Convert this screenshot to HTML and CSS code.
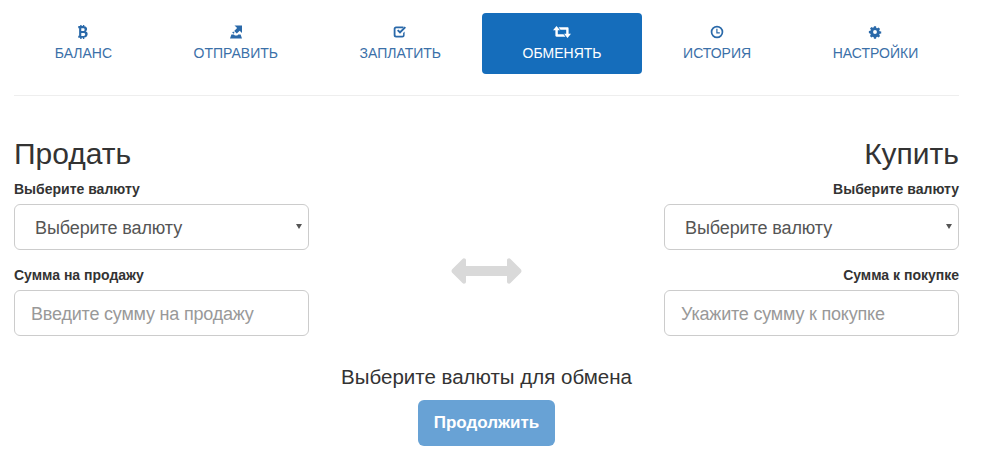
FILE: index.html
```html
<!DOCTYPE html>
<html lang="ru">
<head>
    <meta charset="UTF-8">
    <title>Обменять</title>
    <link rel="stylesheet" href="styles.css">
</head>
<body>
    <nav class="tabs">
        <a class="tab" href="#">
            <svg class="tab-icon" viewBox="2.6 0 10 13"><path d="M3.200 1H5V0h1.300v1h1.200V0h1.300v1.100c1.700.3 2.600 1.200 2.600 2.600 0 1-.5 1.800-1.400 2.200 1.300.4 1.900 1.300 1.900 2.500 0 1.800-1.200 3-3.100 3.300V13H7.500v-1.200H6.300V13H5v-1.200H3.200V10H4V3H3.200zM6 3.100v2.500h1.800c.8 0 1.300-.5 1.300-1.250S8.600 3.100 7.800 3.100zM6 7.400v2.700h2.200c.9 0 1.400-.5 1.400-1.350S9.100 7.400 8.200 7.400z" fill-rule="evenodd"/></svg>
            <span>БАЛАНС</span>
        </a>
        <a class="tab" href="#">
            <svg class="tab-icon" viewBox="0 0 14 14"><path d="M5.500.5H13V8l-2.300-2.300-2.900 2.900L5.200 6l2.900-2.900zM3.200 7.400l1-1 1.400 1.400-1 1zM2.400 9.600h2.500l1 1h2.400l1-1h2.300l1.400 3.900H1z"/></svg>
            <span>ОТПРАВИТЬ</span>
        </a>
        <a class="tab" href="#">
            <svg class="tab-icon" viewBox="0 0 14 14"><path d="M3 1.500h7.500v1.700H3.200c-.4 0-.7.3-.7.7v6.200c0 .4.3.7.7.7h6.200c.4 0 .7-.3.7-.7V8l1.500-1.500v3.700c0 1.300-1 2.300-2.300 2.300H3c-1.300 0-2.300-1-2.300-2.300V3.800C.7 2.500 1.700 1.500 3 1.500z"/><path d="M4 5.700l1.300-1.300 1.700 1.700 4.700-4.700L13 2.700 7 8.700z"/></svg>
            <span>ЗАПЛАТИТЬ</span>
        </a>
        <a class="tab tab-active" href="#">
            <svg class="tab-icon" viewBox="0 0 18 14"><path d="M3.500 1L7 5.200H4.800v4.100h5.700l2 2.400h-9c-.7 0-1.100-.4-1.100-1.100V5.200H0z"/><path d="M14.500 13L18 8.800h-2.400V3.400c0-.7-.4-1.100-1.100-1.100h-9l2 2.400h5.700v4.100H11z"/></svg>
            <span>ОБМЕНЯТЬ</span>
        </a>
        <a class="tab" href="#">
            <svg class="tab-icon" viewBox="0 0 14 14"><path d="M7 .7a6.300 6.300 0 1 0 0 12.600A6.300 6.300 0 0 0 7 .7zm0 1.700a4.600 4.600 0 1 1 0 9.200 4.600 4.600 0 0 1 0-9.200z" fill-rule="evenodd"/><path d="M6.300 3.800h1.200v3.400h2.300v1.200H6.300z"/></svg>
            <span>ИСТОРИЯ</span>
        </a>
        <a class="tab" href="#">
            <svg class="tab-icon" viewBox="-1 -1 16 16"><path d="M5.800.5h2.400l.3 1.800 1.100.5 1.500-1 1.700 1.700-1 1.500.5 1.100 1.800.3v2.400l-1.800.3-.5 1.100 1 1.500-1.700 1.700-1.500-1-1.100.5-.3 1.800H5.800l-.3-1.800-1.100-.5-1.500 1-1.700-1.700 1-1.500-.5-1.100L0 8.200V5.800l1.800-.3.5-1.100-1-1.500L3 1.200l1.500 1 1.100-.5zM7 4.800a2.200 2.200 0 1 0 0 4.400 2.200 2.200 0 0 0 0-4.400z" fill-rule="evenodd"/></svg>
            <span>НАСТРОЙКИ</span>
        </a>
    </nav>
    <hr class="divider">

    <form class="exchange">
        <div class="side">
            <h2>Продать</h2>
            <label>Выберите валюту</label>
            <div class="select-wrap">
                <select class="field field-select"><option>Выберите валюту</option></select>
            </div>
            <label>Сумма на продажу</label>
            <input class="field" type="text" placeholder="Введите сумму на продажу">
        </div>

        <div class="swap">
            <svg class="swap-icon" viewBox="0 0 71 26"><path d="M1.200 11.300L11.500.9c1.200-1.200 3.500-.5 3.500 1.300V8h41V2.200c0-1.800 2.300-2.500 3.500-1.300l10.300 10.400c.9.900.9 2.500 0 3.400L59.500 25.100c-1.200 1.200-3.500.5-3.500-1.300V18H15v5.800c0 1.800-2.300 2.500-3.500 1.300L1.200 14.700c-.9-.9-.9-2.500 0-3.400z"/></svg>
        </div>

        <div class="side side-right">
            <h2>Купить</h2>
            <label>Выберите валюту</label>
            <div class="select-wrap">
                <select class="field field-select"><option>Выберите валюту</option></select>
            </div>
            <label>Сумма к покупке</label>
            <input class="field" type="text" placeholder="Укажите сумму к покупке">
        </div>
    </form>

    <div class="submit-row">
        <p class="hint">Выберите валюты для обмена</p>
        <button class="submit" type="button" disabled>Продолжить</button>
    </div>
</body>
</html>
```

FILE: styles.css
```css
body {
    font-family: "Liberation Sans", Arial, sans-serif;
    color: #333;
    background-color: #fff;
    margin: 0;
    padding: 13px 22px 0 14px;
}

.tabs {
    display: flex;
}

.tab {
    flex: 1 1 auto;
    height: 61px;
    box-sizing: border-box;
    padding-top: 12px;
    display: flex;
    flex-direction: column;
    align-items: center;
    border-radius: 4px;
    color: #3b70a8;
    font-size: 14px;
    line-height: 20px;
    text-decoration: none;
}

.tab-icon {
    width: 14px;
    height: 14px;
    margin-bottom: 4px;
    fill: #2a69a9;
}

.tab-active {
    background-color: #156dbb;
    color: #fff;
}

.tab-active .tab-icon {
    width: 18px;
    fill: #fff;
}

.divider {
    border: none;
    border-top: 1px solid #eee;
    margin: 21px 0 0;
}

.exchange {
    display: grid;
    grid-template-columns: 295px 1fr 295px;
    margin-top: 38px;
}

.side h2 {
    font-size: 30px;
    font-weight: 400;
    line-height: 40px;
    margin: 0 0 6px;
}

.side label {
    display: block;
    font-size: 14px;
    font-weight: 700;
    line-height: 18px;
    margin-bottom: 6px;
}

.side-right {
    text-align: right;
}

.field {
    display: block;
    width: 100%;
    height: 46px;
    box-sizing: border-box;
    padding: 2px 16px 0;
    margin-bottom: 16px;
    border: 1px solid #ccc;
    border-radius: 6px;
    background-color: #fff;
    font-family: inherit;
    font-size: 18px;
    letter-spacing: -0.1px;
    color: #555;
}

.field::placeholder {
    color: #999;
    opacity: 1;
    letter-spacing: -0.2px;
}

.field-select {
    appearance: none;
    padding-left: 20px;
}

.select-wrap {
    position: relative;
}

.select-wrap::after {
    content: "";
    position: absolute;
    top: 20px;
    right: 7px;
    border-left: 3px solid transparent;
    border-right: 3px solid transparent;
    border-top: 5px solid #555;
}

.swap {
    display: flex;
    justify-content: center;
    padding-top: 124px;
}

.swap-icon {
    width: 71px;
    height: 26px;
    fill: #d9d9d9;
}

.submit-row {
    display: flex;
    flex-direction: column;
    align-items: center;
    margin-top: 12px;
}

.hint {
    font-size: 20.5px;
    line-height: 26px;
    margin: 0 0 10px;
}

.submit {
    width: 137px;
    height: 46px;
    border: none;
    border-radius: 6px;
    background-color: #68a2d5;
    color: #fff;
    font-family: inherit;
    font-size: 17px;
    font-weight: 700;
}
```
